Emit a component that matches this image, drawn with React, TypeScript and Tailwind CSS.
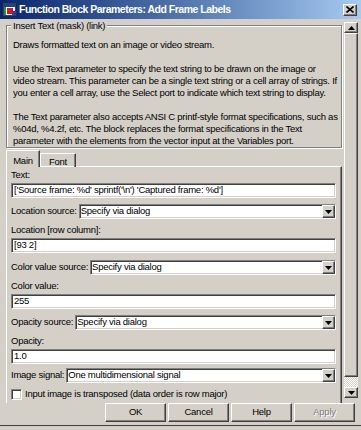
import React from "react";

const sunken =
  "bg-white border border-t-[#808080] border-l-[#808080] border-b-white border-r-white shadow-[inset_1px_1px_0_#404040,inset_-1px_-1px_0_#d4d0c8]";
const raised =
  "bg-[#d4d0c8] border border-t-white border-l-white border-b-[#404040] border-r-[#404040] shadow-[inset_-1px_-1px_0_#808080]";

function Arrow({ up = false }: { up?: boolean }) {
  return (
    <svg width="7" height="4" viewBox="0 0 7 4" className={up ? "rotate-180" : ""}>
      <path d="M0 0h7L3.5 4z" fill="#000" />
    </svg>
  );
}

function TextField({ value }: { value: string }) {
  return (
    <div className={`${sunken} h-[15px] flex items-center pl-[2px] whitespace-nowrap overflow-hidden`}>
      {value}
    </div>
  );
}

function Combo({ label, value, mt }: { label: string; value: string; mt: string }) {
  return (
    <div className={`flex items-center gap-[2px] ${mt}`}>
      <span className="whitespace-nowrap">{label}</span>
      <div className={`${sunken} h-[15px] flex-1 flex items-center justify-between`}>
        <span className="pl-[1px] whitespace-nowrap">{value}</span>
        <div className={`${raised} w-[13px] h-[13px] flex items-center justify-center`}>
          <Arrow />
        </div>
      </div>
    </div>
  );
}

function Label({ children, mt }: { children: React.ReactNode; mt: string }) {
  return <div className={`h-[12px] leading-[12px] mb-[2px] ${mt}`}>{children}</div>;
}

export default function App() {
  return (
    <div className="w-[361px] h-[430px] bg-[#d4d0c8] overflow-hidden flex flex-col text-black text-[9.5px] tracking-[-0.25px] font-['Liberation_Sans',Arial,sans-serif]">
      {/* Title bar */}
      <div className="h-[19px] flex items-center bg-gradient-to-r from-[#0a246a] to-[#a6caf0] pl-[3px] pr-[4px]">
        <svg width="13" height="13" viewBox="0 0 13 13">
          <rect x="0.5" y="0.5" width="12" height="12" fill="#fff" stroke="#404040" />
          <rect x="1" y="1" width="11" height="3" fill="#1c3f9e" />
          <rect x="1" y="4" width="2" height="8" fill="#1a9e2a" />
          <rect x="4" y="5" width="6" height="6" fill="#e0141c" />
          <rect x="9" y="8" width="3" height="4" fill="#2040c0" />
        </svg>
        <span className="ml-[3px] text-white font-bold text-[10.5px] tracking-[-0.5px] whitespace-nowrap">
          Function Block Parameters: Add Frame Labels
        </span>
        <div className="flex-1" />
        <div className={`${raised} w-[14px] h-[12px] flex items-center justify-center`}>
          <svg width="8" height="7" viewBox="0 0 8 7">
            <path d="M0.5 0.5L7.5 6.5M7.5 0.5L0.5 6.5" stroke="#000" strokeWidth="1.6" />
          </svg>
        </div>
      </div>

      {/* Scroll area */}
      <div className="flex mt-[3px] h-[379px] items-start">
        <div className="w-[344px] pl-[6px] pr-[2px]">
          {/* Group box */}
          <div className="relative mt-[3px] h-[123px] border border-[#808080] shadow-[inset_1px_1px_0_#fff,1px_1px_0_#fff] pl-[6px] pt-[13px]">
            <span className="absolute -top-[6px] left-[4px] px-[2px] bg-[#d4d0c8] leading-[12px] whitespace-nowrap">
              Insert Text (mask) (link)
            </span>
            <div className="leading-[12px] whitespace-nowrap">
              <div>Draws formatted text on an image or video stream.</div>
              <div className="mt-[12px]">Use the Text parameter to specify the text string to be drawn on the image or</div>
              <div>video stream. This parameter can be a single text string or a cell array of strings. If</div>
              <div>you enter a cell array, use the Select port to indicate which text string to display.</div>
              <div className="mt-[12px]">The Text parameter also accepts ANSI C printf-style format specifications, such as</div>
              <div>%04d, %4.2f, etc. The block replaces the format specifications in the Text</div>
              <div>parameter with the elements from the vector input at the Variables port.</div>
            </div>
          </div>

          {/* Tabs */}
          <div className="flex items-end mt-[2px] h-[17px]">
            <div className="relative z-10 h-[17px] w-[34px] bg-[#d4d0c8] border-t border-l border-white border-r border-r-[#404040] shadow-[inset_-1px_0_0_#808080] flex items-start justify-center pt-[3px]">
              Main
            </div>
            <div className="h-[14px] w-[36px] border-t border-l border-white border-r border-r-[#404040] shadow-[inset_-1px_0_0_#808080] flex items-start justify-center pt-[1px]">
              Font
            </div>
          </div>
          <div className="-mt-[1px] h-[237px] overflow-hidden border-t border-l border-white border-r border-r-[#404040] shadow-[inset_-1px_0_0_#808080] pl-[4px] pr-[5px]">
            <Label mt="mt-[2px]">Text:</Label>
            <TextField value={"['Source frame: %d' sprintf('\\n') 'Captured frame: %d']"} />
            <Combo label="Location source:" value="Specify via dialog" mt="mt-[6px]" />
            <Label mt="mt-[5px]">Location [row column]:</Label>
            <TextField value="[93 2]" />
            <Combo label="Color value source:" value="Specify via dialog" mt="mt-[7px]" />
            <Label mt="mt-[5px]">Color value:</Label>
            <TextField value="255" />
            <Combo label="Opacity source:" value="Specify via dialog" mt="mt-[6px]" />
            <Label mt="mt-[5px]">Opacity:</Label>
            <TextField value="1.0" />
            <Combo label="Image signal:" value="One multidimensional signal" mt="mt-[4px]" />
            <div className="flex items-center mt-[5px] h-[13px]">
              <div className={`${sunken} w-[11px] h-[11px]`} />
              <span className="ml-[3px] whitespace-nowrap">Input image is transposed (data order is row major)</span>
            </div>
          </div>
        </div>

        {/* Scrollbar */}
        <div className="w-[14px] h-[376px] flex flex-col">
          <div className={`${raised} h-[11px] flex items-center justify-center`}>
            <Arrow up />
          </div>
          <div className={`${raised} flex-1`} />
          <div className="h-[10px] bg-[repeating-conic-gradient(#fff_0_25%,#d4d0c8_0_50%)] bg-[length:2px_2px]" />
          <div className={`${raised} h-[11px] flex items-center justify-center`}>
            <Arrow />
          </div>
        </div>
      </div>

      {/* Buttons */}
      <div className="flex justify-end gap-[2px] pr-[6px] mt-[2px]">
        {["OK", "Cancel", "Help", "Apply"].map((b) => (
          <div
            key={b}
            className={`${raised} w-[61px] h-[19px] flex items-center justify-center ${
              b === "Apply" ? "text-[#808080] [text-shadow:1px_1px_0_#fff]" : ""
            }`}
          >
            {b}
          </div>
        ))}
      </div>
      <div className="mt-[3px] h-[1px] bg-[#404040]" />
    </div>
  );
}
